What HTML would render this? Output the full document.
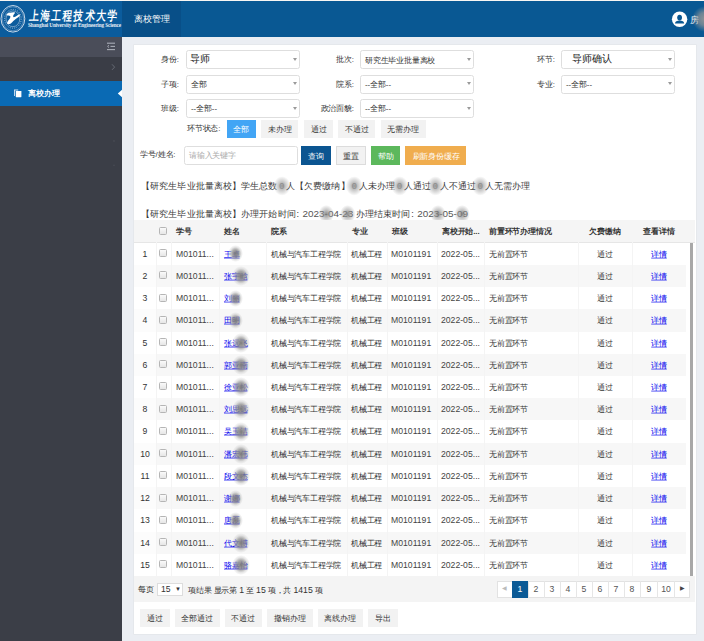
<!DOCTYPE html>
<html><head><meta charset="utf-8">
<style>
*{box-sizing:border-box;margin:0;padding:0}
html,body{width:704px;height:641px;overflow:hidden}
body{position:relative;background:#ebeef3;font-family:"Liberation Sans",sans-serif;font-size:12px;color:#333}
.abs{position:absolute}
.t{position:absolute;white-space:nowrap;line-height:1.3}
.L{font-size:1.11em}
.Lc{color:#4a4a4a}
#topline{left:0;top:0;width:704px;height:1px;background:#f8f6f3}
#hdr{left:0;top:1px;width:704px;height:36px;background:#095893}
#logo{left:0;top:0;width:122px;height:36px;background:#0b5c9d}
#tab{left:122px;top:0;width:59px;height:36px;background:#084f88}
#side{left:0;top:37px;width:122px;height:604px;background:#3b3e47}
#tog{left:0;top:0;width:122px;height:20px;background:#4a4d59}
#item1{left:0;top:20px;width:122px;height:24px;background:#3a3d46}
#act{left:0;top:44px;width:122px;height:25px;background:#0a6ab4}
#panel{left:133.5px;top:44.5px;width:562.5px;height:589.5px;background:#fff;box-shadow:0 0 0 0.6px #e2e4e8}
.sel{position:absolute;height:19px;border:1px solid #dedede;border-radius:2.5px;background:#fff}
.sel:after{content:"";position:absolute;right:1.6px;top:6.6px;border-left:2.7px solid transparent;border-right:2.7px solid transparent;border-top:3.2px solid #9a9a9a}
.sel.nosel:after{display:none}
.btn{position:absolute;height:19px;background:#f2f2f2}
.thead{background:#f5f5f5}
.tr{left:0;width:552px;height:22.27px}
.cb{position:absolute;width:8px;height:8px;border:1px solid #b5b5b5;border-radius:1.5px;background:linear-gradient(#fafafa,#e6e6e6)}
.lk{color:#0000ee;text-decoration:underline}
.blob{position:absolute;border-radius:50%;background:radial-gradient(closest-side,rgba(125,125,125,1),rgba(140,140,140,.75) 45%,rgba(170,170,170,.3) 75%,rgba(200,200,200,0))}
.vl{position:absolute;top:0;width:1px;background:#f4f4f4}
.dg{display:inline-block;text-align:center;font-size:1.0em;position:relative;color:#999}
.dg:before{content:"";position:absolute;left:50%;top:50%;width:26px;height:30px;margin:-15px 0 0 -13px;border-radius:50%;background:radial-gradient(closest-side,rgba(125,125,125,.8),rgba(150,150,150,.45) 50%,rgba(200,200,200,0))}
.dg2{position:relative}
.dg2:before{content:"";position:absolute;left:50%;top:50%;width:24px;height:28px;margin:-14px 0 0 -12px;border-radius:50%;background:radial-gradient(closest-side,rgba(120,120,120,.85),rgba(150,150,150,.5) 50%,rgba(200,200,200,0))}
.L2{font-size:1.09em;color:#555}
.cln{display:inline-block;width:.75em;text-align:left;padding-left:.1em}
.pag{position:absolute;left:362.7px;top:4.6px;height:17.4px;border:1px solid #e3e3e3;background:#fff}
.pg{position:absolute;top:0;width:16px;height:15.4px;border-left:1px solid #e8e8e8}
</style></head><body>
<div id="topline" class="abs"></div>
<div id="hdr" class="abs"><div id="logo" class="abs"></div><div id="tab" class="abs"></div></div>
<svg class="abs" style="left:0;top:1px" width="122" height="36" viewBox="0 0 122 36">
<ellipse cx="12.9" cy="17.8" rx="11.9" ry="13.3" fill="none" stroke="#dfe8f2" stroke-width="0.9"/>
<ellipse cx="12.9" cy="17.8" rx="10.6" ry="12" fill="none" stroke="#9fb9d6" stroke-width="0.5"/>
<ellipse cx="12.9" cy="17.8" rx="8.3" ry="9.4" fill="none" stroke="#c9d8e8" stroke-width="0.8" stroke-dasharray="1 1.3"/>
<ellipse cx="12.9" cy="17.8" rx="6.9" ry="7.9" fill="none" stroke="#d5e1ee" stroke-width="0.5"/>
<path transform="translate(0,-1)" d="M6.6 14.2 C8 12.6 11 12.8 13.5 12.2 C14.8 11.9 15.4 12.6 14.6 13.6 C13.8 14.6 13 15.5 13.2 16.8 C13.6 17.6 15 17 16.5 16 C18 15 19.5 14.4 20.2 14.6 C20.4 15.4 19 16.8 17.5 17.8 C15.5 19.2 13.5 20.6 12.2 22.2 C11 23.6 9.2 24.4 7.8 24 C6.8 23.6 6.9 22.4 7.8 21.2 C9 19.6 10.4 18 10.4 16.4 C10.2 15.4 8.6 15.4 7.4 15.4 C6.6 15.3 6.3 14.8 6.6 14.2 Z" fill="#fff"/>
</svg>
<div class="t" style="left:28.5px;top:16.1px;font-size:16px;color:#fff;font-weight:bold;letter-spacing:2.67px;transform-origin:0 50%;transform:translateY(-50%) scale(0.6,0.8) skewX(-8deg)">上海工程技术大学</div>
<div class="t " style="left:28.30px;top:26.20px;font-size:8px;transform-origin:0 50%;transform:translateY(-50%) scale(0.6500);color:#e8eef5;font-weight:bold;font-family:'Liberation Serif',serif;letter-spacing:-0.15px">Shanghai University of Engineering Science</div>
<div class="t " style="left:151.50px;top:19.00px;font-size:14px;transform-origin:50% 50%;transform:translate(-50%,-50%) scale(0.6357);color:#fff;">离校管理</div>
<div id="side" class="abs"><div id="tog" class="abs"></div><div id="item1" class="abs"></div><div id="act" class="abs"></div></div>
<div class="t " style="left:27.90px;top:93.60px;font-size:12px;transform-origin:0 50%;transform:translateY(-50%) scale(0.6542);color:#fff;font-weight:bold;">离校办理</div>
<svg class="abs" style="left:0;top:37px" width="122" height="140" viewBox="0 0 122 140">
<g stroke="#a9adb7" stroke-width="1.1" fill="none">
<line x1="107" y1="6.2" x2="115" y2="6.2"/><line x1="110.5" y1="9.4" x2="115" y2="9.4"/><line x1="107" y1="12.6" x2="115" y2="12.6"/>
<polyline points="109,8.2 107.6,9.4 109,10.6" stroke-width="0.9"/>
</g>
<polyline points="112,27.3 114.6,30.1 112,32.9" stroke="#6a6e78" stroke-width="0.9" fill="none"/>
<g fill="#fff"><rect x="15.8" y="54" width="5.6" height="6.2" rx="0.4"/><path d="M14 52.6 h4.2 v0.9 h-3.3 v5.4 h-0.9 z" fill="#cfe0f0"/></g>
<polygon points="122,52.8 117.8,56.5 122,60.2" fill="#fff"/>
<g fill="#474a53"><circle cx="114" cy="104" r="0.9"/><circle cx="114" cy="128.3" r="0.9"/></g>
</svg>
<svg class="abs" style="left:670px;top:9px" width="20" height="20" viewBox="0 0 20 20">
<circle cx="9.6" cy="10.3" r="7.7" fill="#fff"/>
<ellipse cx="9.6" cy="8.6" rx="2.4" ry="2.9" fill="#095893"/>
<path d="M5 14.6 C5.2 12.4 7 11.6 9.6 11.6 C12.2 11.6 14 12.4 14.2 14.6 Z" fill="#095893"/>
</svg>
<div class="t " style="left:690.20px;top:19.80px;font-size:14px;transform-origin:0 50%;transform:translateY(-50%) scale(0.6286);color:#fff;">房</div>
<div class="blob" style="left:692px;top:6px;width:26px;height:26px;background:radial-gradient(closest-side,rgba(150,150,150,.95),rgba(150,150,150,.7) 50%,rgba(150,150,150,0))"></div>
<div id="panel" class="abs"></div>
<div class="t " style="left:179.20px;top:60.20px;font-size:12px;transform-origin:100% 50%;transform:translate(-100%,-50%) scale(0.6500);">身份:</div>
<div class="t " style="left:354.20px;top:60.20px;font-size:12px;transform-origin:100% 50%;transform:translate(-100%,-50%) scale(0.6500);">批次:</div>
<div class="t " style="left:555.20px;top:60.20px;font-size:12px;transform-origin:100% 50%;transform:translate(-100%,-50%) scale(0.6500);">环节:</div>
<div class="t " style="left:179.20px;top:84.60px;font-size:12px;transform-origin:100% 50%;transform:translate(-100%,-50%) scale(0.6500);">子项:</div>
<div class="t " style="left:354.20px;top:84.60px;font-size:12px;transform-origin:100% 50%;transform:translate(-100%,-50%) scale(0.6500);">院系:</div>
<div class="t " style="left:555.20px;top:84.60px;font-size:12px;transform-origin:100% 50%;transform:translate(-100%,-50%) scale(0.6500);">专业:</div>
<div class="t " style="left:179.20px;top:109.10px;font-size:12px;transform-origin:100% 50%;transform:translate(-100%,-50%) scale(0.6500);">班级:</div>
<div class="t " style="left:354.20px;top:109.10px;font-size:12px;transform-origin:100% 50%;transform:translate(-100%,-50%) scale(0.6500);">政治面貌:</div>
<div class="sel" style="left:186px;top:50.4px;width:113.5px"></div><div class="t " style="left:190.20px;top:58.80px;font-size:16px;transform-origin:0 50%;transform:translateY(-50%) scale(0.6250);letter-spacing:0px;color:#222">导师</div>
<div class="sel" style="left:360.2px;top:50.4px;width:113.6px"></div><div class="t " style="left:365.20px;top:60.80px;font-size:12px;transform-origin:0 50%;transform:translateY(-50%) scale(0.6500);">研究生毕业批量离校</div>
<div class="sel" style="left:561.3px;top:50.4px;width:113.3px"></div><div class="t " style="left:571.80px;top:58.80px;font-size:16px;transform-origin:0 50%;transform:translateY(-50%) scale(0.6250);letter-spacing:0px;color:#222">导师确认</div>
<div class="sel" style="left:186px;top:74.7px;width:113.5px"></div><div class="t " style="left:191.00px;top:85.10px;font-size:12px;transform-origin:0 50%;transform:translateY(-50%) scale(0.6500);">全部</div>
<div class="sel" style="left:360.2px;top:74.7px;width:113.6px"></div><div class="t " style="left:365.20px;top:85.10px;font-size:12px;transform-origin:0 50%;transform:translateY(-50%) scale(0.6500);">--全部--</div>
<div class="sel" style="left:561.3px;top:74.7px;width:113.3px"></div><div class="t " style="left:566.30px;top:85.10px;font-size:12px;transform-origin:0 50%;transform:translateY(-50%) scale(0.6500);">--全部--</div>
<div class="sel" style="left:186px;top:99.0px;width:113.5px"></div><div class="t " style="left:191.00px;top:109.40px;font-size:12px;transform-origin:0 50%;transform:translateY(-50%) scale(0.6500);">--全部--</div>
<div class="sel" style="left:360.2px;top:99.0px;width:113.6px"></div><div class="t " style="left:365.20px;top:109.40px;font-size:12px;transform-origin:0 50%;transform:translateY(-50%) scale(0.6500);">--全部--</div>
<div class="t " style="left:187.00px;top:128.60px;font-size:12px;transform-origin:0 50%;transform:translateY(-50%) scale(0.6500);">环节状态:</div>
<div class="btn" style="left:226.6px;top:119.5px;width:29.7px;height:18.9px;background:#42a5f5;"></div><div class="t " style="left:241.45px;top:129.85px;font-size:12px;transform-origin:50% 50%;transform:translate(-50%,-50%) scale(0.6500);color:#fff;">全部</div>
<div class="btn" style="left:260.7px;top:119.5px;width:37.8px;height:18.9px;background:#f2f2f2;"></div><div class="t " style="left:279.60px;top:129.85px;font-size:12px;transform-origin:50% 50%;transform:translate(-50%,-50%) scale(0.6500);color:#333;">未办理</div>
<div class="btn" style="left:304.2px;top:119.5px;width:29.0px;height:18.9px;background:#f2f2f2;"></div><div class="t " style="left:318.70px;top:129.85px;font-size:12px;transform-origin:50% 50%;transform:translate(-50%,-50%) scale(0.6500);color:#333;">通过</div>
<div class="btn" style="left:338.3px;top:119.5px;width:36.9px;height:18.9px;background:#f2f2f2;"></div><div class="t " style="left:356.75px;top:129.85px;font-size:12px;transform-origin:50% 50%;transform:translate(-50%,-50%) scale(0.6500);color:#333;">不通过</div>
<div class="btn" style="left:380.9px;top:119.5px;width:44.9px;height:18.9px;background:#f2f2f2;"></div><div class="t " style="left:403.35px;top:129.85px;font-size:12px;transform-origin:50% 50%;transform:translate(-50%,-50%) scale(0.6500);color:#333;">无需办理</div>
<div class="t " style="left:140.00px;top:155.20px;font-size:12px;transform-origin:0 50%;transform:translateY(-50%) scale(0.6500);">学号/姓名:</div>
<div class="sel nosel" style="left:184px;top:146.2px;width:113.6px"></div>
<div class="t " style="left:189.00px;top:156.00px;font-size:12px;transform-origin:0 50%;transform:translateY(-50%) scale(0.6500);color:#aaa;">请输入关键字</div>
<div class="btn" style="left:301.4px;top:146.4px;width:29.2px;height:18.4px;background:#0b5591;"></div><div class="t " style="left:316.00px;top:156.50px;font-size:12px;transform-origin:50% 50%;transform:translate(-50%,-50%) scale(0.6500);color:#fff;">查询</div>
<div class="btn" style="left:336.3px;top:146.4px;width:29.3px;height:18.4px;background:#f2f2f2;border:1px solid #dcdcdc;"></div><div class="t " style="left:350.95px;top:156.50px;font-size:12px;transform-origin:50% 50%;transform:translate(-50%,-50%) scale(0.6500);color:#333;">重置</div>
<div class="btn" style="left:371.0px;top:146.4px;width:29.2px;height:18.4px;background:#5cb85c;"></div><div class="t " style="left:385.60px;top:156.50px;font-size:12px;transform-origin:50% 50%;transform:translate(-50%,-50%) scale(0.6500);color:#fff;">帮助</div>
<div class="btn" style="left:405.0px;top:146.4px;width:61.1px;height:18.4px;background:#f0ad4e;"></div><div class="t " style="left:435.55px;top:156.50px;font-size:12px;transform-origin:50% 50%;transform:translate(-50%,-50%) scale(0.6500);color:#fff;">刷新身份缓存</div>
<div class="t " style="left:141.00px;top:186.20px;font-size:14px;transform-origin:0 50%;transform:translateY(-50%) scale(0.6500);color:#3a3a3a;">【研究生毕业批量离校】学生总数<span class="dg" style="width:13px">0</span>人【欠费缴纳】<span class="dg" style="width:14.5px">0</span>人未办理<span class="dg" style="width:12.5px">0</span>人通过<span class="dg" style="width:13.5px">0</span>人不通过<span class="dg" style="width:13px">0</span>人无需办理</div>
<div class="t " style="left:141.00px;top:214.40px;font-size:14px;transform-origin:0 50%;transform:translateY(-50%) scale(0.6500);color:#3a3a3a;">【研究生毕业批量离校】办理开始时间<span class="cln">:</span><span class="L2">202<span class="dg2">3-0</span>4-<span class="dg2">23</span></span> 办理结束时间<span class="cln">:</span><span class="L2">202<span class="dg2">3-</span>05-<span class="dg2">09</span></span></div>
<div id="tbl" class="abs" style="left:134px;top:220px;width:561px;height:382px;overflow:hidden"><div class="thead abs" style="left:0;top:0;width:561px;height:22.7px"></div><div class="abs" style="left:0;top:22px;width:561px;height:0.8px;background:#e6e6e6"></div><div class="tr abs" style="top:22.70px;background:#fff"></div><div class="tr abs" style="top:44.92px;background:#f7f7f7"></div><div class="abs" style="left:0;top:44.92px;width:21.5px;height:22.22px;background:#fcfcfc"></div><div class="tr abs" style="top:67.14px;background:#fff"></div><div class="tr abs" style="top:89.36px;background:#f7f7f7"></div><div class="abs" style="left:0;top:89.36px;width:21.5px;height:22.22px;background:#fcfcfc"></div><div class="tr abs" style="top:111.58px;background:#fff"></div><div class="tr abs" style="top:133.80px;background:#f7f7f7"></div><div class="abs" style="left:0;top:133.80px;width:21.5px;height:22.22px;background:#fcfcfc"></div><div class="tr abs" style="top:156.02px;background:#fff"></div><div class="tr abs" style="top:178.24px;background:#f7f7f7"></div><div class="abs" style="left:0;top:178.24px;width:21.5px;height:22.22px;background:#fcfcfc"></div><div class="tr abs" style="top:200.46px;background:#fff"></div><div class="tr abs" style="top:222.68px;background:#f7f7f7"></div><div class="abs" style="left:0;top:222.68px;width:21.5px;height:22.22px;background:#fcfcfc"></div><div class="tr abs" style="top:244.90px;background:#fff"></div><div class="tr abs" style="top:267.12px;background:#f7f7f7"></div><div class="abs" style="left:0;top:267.12px;width:21.5px;height:22.22px;background:#fcfcfc"></div><div class="tr abs" style="top:289.34px;background:#fff"></div><div class="tr abs" style="top:311.56px;background:#f7f7f7"></div><div class="abs" style="left:0;top:311.56px;width:21.5px;height:22.22px;background:#fcfcfc"></div><div class="tr abs" style="top:333.78px;background:#fff"></div><div class="vl" style="left:21.5px;top:22px;height:334px"></div><div class="vl" style="left:37.1px;top:22px;height:334px"></div><div class="vl" style="left:85.3px;top:22px;height:334px"></div><div class="vl" style="left:132.3px;top:22px;height:334px"></div><div class="vl" style="left:212.6px;top:22px;height:334px"></div><div class="vl" style="left:253.0px;top:22px;height:334px"></div><div class="vl" style="left:302.7px;top:22px;height:334px"></div><div class="vl" style="left:349.7px;top:22px;height:334px"></div><div class="vl" style="left:444.0px;top:22px;height:334px"></div><div class="vl" style="left:498.4px;top:22px;height:334px"></div><div class="abs" style="left:556px;top:23px;width:3px;height:333px;background:#a8a8a8"></div><div class="abs" style="left:0;top:356px;width:561px;height:26px;background:#f4f4f4"></div></div>
<div class="cb" style="left:159px;top:227.3px"></div>
<div class="t " style="left:176.10px;top:231.80px;font-size:12px;transform-origin:0 50%;transform:translateY(-50%) scale(0.6500);color:#333;font-weight:bold;">学号</div>
<div class="t " style="left:224.30px;top:231.80px;font-size:12px;transform-origin:0 50%;transform:translateY(-50%) scale(0.6500);color:#333;font-weight:bold;">姓名</div>
<div class="t " style="left:271.30px;top:231.80px;font-size:12px;transform-origin:0 50%;transform:translateY(-50%) scale(0.6500);color:#333;font-weight:bold;">院系</div>
<div class="t " style="left:351.60px;top:231.80px;font-size:12px;transform-origin:0 50%;transform:translateY(-50%) scale(0.6500);color:#333;font-weight:bold;">专业</div>
<div class="t " style="left:392.00px;top:231.80px;font-size:12px;transform-origin:0 50%;transform:translateY(-50%) scale(0.6500);color:#333;font-weight:bold;">班级</div>
<div class="t " style="left:441.70px;top:231.80px;font-size:12px;transform-origin:0 50%;transform:translateY(-50%) scale(0.6500);color:#333;font-weight:bold;">离校开始...</div>
<div class="t " style="left:488.70px;top:231.80px;font-size:12px;transform-origin:0 50%;transform:translateY(-50%) scale(0.6500);color:#333;font-weight:bold;">前置环节办理情况</div>
<div class="t " style="left:605.20px;top:231.80px;font-size:12px;transform-origin:50% 50%;transform:translate(-50%,-50%) scale(0.6500);color:#333;font-weight:bold;">欠费缴纳</div>
<div class="t " style="left:659.05px;top:231.80px;font-size:12px;transform-origin:50% 50%;transform:translate(-50%,-50%) scale(0.6500);color:#333;font-weight:bold;">查看详情</div>
<div class="t " style="left:144.50px;top:254.71px;font-size:13px;transform-origin:50% 50%;transform:translate(-50%,-50%) scale(0.6654);">1</div>
<div class="cb" style="left:159px;top:249.1px"></div>
<div class="t " style="left:175.80px;top:254.71px;font-size:13px;transform-origin:0 50%;transform:translateY(-50%) scale(0.6654);color:#444;">M01011...</div>
<div class="t " style="left:223.80px;top:254.71px;font-size:12px;transform-origin:0 50%;transform:translateY(-50%) scale(0.6500);"><span class="lk">王卓</span></div>
<div class="blob" style="left:228.0px;top:245.2px;width:15px;height:17px;opacity:1.0"></div>
<div class="t " style="left:271.30px;top:254.71px;font-size:12px;transform-origin:0 50%;transform:translateY(-50%) scale(0.6500);">机械与汽车工程学院</div>
<div class="t " style="left:351.00px;top:254.71px;font-size:12px;transform-origin:0 50%;transform:translateY(-50%) scale(0.6500);">机械工程</div>
<div class="t " style="left:391.20px;top:254.71px;font-size:13px;transform-origin:0 50%;transform:translateY(-50%) scale(0.6654);color:#444;">M0101191</div>
<div class="t " style="left:441.00px;top:254.71px;font-size:13px;transform-origin:0 50%;transform:translateY(-50%) scale(0.6654);color:#444;">2022-05...</div>
<div class="t " style="left:488.80px;top:254.71px;font-size:12px;transform-origin:0 50%;transform:translateY(-50%) scale(0.6500);">无前置环节</div>
<div class="t " style="left:605.00px;top:254.71px;font-size:12px;transform-origin:50% 50%;transform:translate(-50%,-50%) scale(0.6500);">通过</div>
<div class="t " style="left:658.60px;top:254.71px;font-size:12px;transform-origin:50% 50%;transform:translate(-50%,-50%) scale(0.6500);"><span class="lk">详情</span></div>
<div class="t " style="left:144.50px;top:276.93px;font-size:13px;transform-origin:50% 50%;transform:translate(-50%,-50%) scale(0.6654);">2</div>
<div class="cb" style="left:159px;top:271.3px"></div>
<div class="t " style="left:175.80px;top:276.93px;font-size:13px;transform-origin:0 50%;transform:translateY(-50%) scale(0.6654);color:#444;">M01011...</div>
<div class="t " style="left:223.80px;top:276.93px;font-size:12px;transform-origin:0 50%;transform:translateY(-50%) scale(0.6500);"><span class="lk">张宇晗</span></div>
<div class="blob" style="left:231.5px;top:265.9px;width:18px;height:20px;opacity:1.0"></div>
<div class="t " style="left:271.30px;top:276.93px;font-size:12px;transform-origin:0 50%;transform:translateY(-50%) scale(0.6500);">机械与汽车工程学院</div>
<div class="t " style="left:351.00px;top:276.93px;font-size:12px;transform-origin:0 50%;transform:translateY(-50%) scale(0.6500);">机械工程</div>
<div class="t " style="left:391.20px;top:276.93px;font-size:13px;transform-origin:0 50%;transform:translateY(-50%) scale(0.6654);color:#444;">M0101191</div>
<div class="t " style="left:441.00px;top:276.93px;font-size:13px;transform-origin:0 50%;transform:translateY(-50%) scale(0.6654);color:#444;">2022-05...</div>
<div class="t " style="left:488.80px;top:276.93px;font-size:12px;transform-origin:0 50%;transform:translateY(-50%) scale(0.6500);">无前置环节</div>
<div class="t " style="left:605.00px;top:276.93px;font-size:12px;transform-origin:50% 50%;transform:translate(-50%,-50%) scale(0.6500);">通过</div>
<div class="t " style="left:658.60px;top:276.93px;font-size:12px;transform-origin:50% 50%;transform:translate(-50%,-50%) scale(0.6500);"><span class="lk">详情</span></div>
<div class="t " style="left:144.50px;top:299.15px;font-size:13px;transform-origin:50% 50%;transform:translate(-50%,-50%) scale(0.6654);">3</div>
<div class="cb" style="left:159px;top:293.5px"></div>
<div class="t " style="left:175.80px;top:299.15px;font-size:13px;transform-origin:0 50%;transform:translateY(-50%) scale(0.6654);color:#444;">M01011...</div>
<div class="t " style="left:223.80px;top:299.15px;font-size:12px;transform-origin:0 50%;transform:translateY(-50%) scale(0.6500);"><span class="lk">刘丽</span></div>
<div class="blob" style="left:228.0px;top:289.6px;width:15px;height:17px;opacity:1.0"></div>
<div class="t " style="left:271.30px;top:299.15px;font-size:12px;transform-origin:0 50%;transform:translateY(-50%) scale(0.6500);">机械与汽车工程学院</div>
<div class="t " style="left:351.00px;top:299.15px;font-size:12px;transform-origin:0 50%;transform:translateY(-50%) scale(0.6500);">机械工程</div>
<div class="t " style="left:391.20px;top:299.15px;font-size:13px;transform-origin:0 50%;transform:translateY(-50%) scale(0.6654);color:#444;">M0101191</div>
<div class="t " style="left:441.00px;top:299.15px;font-size:13px;transform-origin:0 50%;transform:translateY(-50%) scale(0.6654);color:#444;">2022-05...</div>
<div class="t " style="left:488.80px;top:299.15px;font-size:12px;transform-origin:0 50%;transform:translateY(-50%) scale(0.6500);">无前置环节</div>
<div class="t " style="left:605.00px;top:299.15px;font-size:12px;transform-origin:50% 50%;transform:translate(-50%,-50%) scale(0.6500);">通过</div>
<div class="t " style="left:658.60px;top:299.15px;font-size:12px;transform-origin:50% 50%;transform:translate(-50%,-50%) scale(0.6500);"><span class="lk">详情</span></div>
<div class="t " style="left:144.50px;top:321.37px;font-size:13px;transform-origin:50% 50%;transform:translate(-50%,-50%) scale(0.6654);">4</div>
<div class="cb" style="left:159px;top:315.8px"></div>
<div class="t " style="left:175.80px;top:321.37px;font-size:13px;transform-origin:0 50%;transform:translateY(-50%) scale(0.6654);color:#444;">M01011...</div>
<div class="t " style="left:223.80px;top:321.37px;font-size:12px;transform-origin:0 50%;transform:translateY(-50%) scale(0.6500);"><span class="lk">田明</span></div>
<div class="blob" style="left:228.0px;top:311.9px;width:15px;height:17px;opacity:1.0"></div>
<div class="t " style="left:271.30px;top:321.37px;font-size:12px;transform-origin:0 50%;transform:translateY(-50%) scale(0.6500);">机械与汽车工程学院</div>
<div class="t " style="left:351.00px;top:321.37px;font-size:12px;transform-origin:0 50%;transform:translateY(-50%) scale(0.6500);">机械工程</div>
<div class="t " style="left:391.20px;top:321.37px;font-size:13px;transform-origin:0 50%;transform:translateY(-50%) scale(0.6654);color:#444;">M0101191</div>
<div class="t " style="left:441.00px;top:321.37px;font-size:13px;transform-origin:0 50%;transform:translateY(-50%) scale(0.6654);color:#444;">2022-05...</div>
<div class="t " style="left:488.80px;top:321.37px;font-size:12px;transform-origin:0 50%;transform:translateY(-50%) scale(0.6500);">无前置环节</div>
<div class="t " style="left:605.00px;top:321.37px;font-size:12px;transform-origin:50% 50%;transform:translate(-50%,-50%) scale(0.6500);">通过</div>
<div class="t " style="left:658.60px;top:321.37px;font-size:12px;transform-origin:50% 50%;transform:translate(-50%,-50%) scale(0.6500);"><span class="lk">详情</span></div>
<div class="t " style="left:144.50px;top:343.59px;font-size:13px;transform-origin:50% 50%;transform:translate(-50%,-50%) scale(0.6654);">5</div>
<div class="cb" style="left:159px;top:338.0px"></div>
<div class="t " style="left:175.80px;top:343.59px;font-size:13px;transform-origin:0 50%;transform:translateY(-50%) scale(0.6654);color:#444;">M01011...</div>
<div class="t " style="left:223.80px;top:343.59px;font-size:12px;transform-origin:0 50%;transform:translateY(-50%) scale(0.6500);"><span class="lk">张远飞</span></div>
<div class="blob" style="left:231.5px;top:332.6px;width:18px;height:20px;opacity:1.0"></div>
<div class="t " style="left:271.30px;top:343.59px;font-size:12px;transform-origin:0 50%;transform:translateY(-50%) scale(0.6500);">机械与汽车工程学院</div>
<div class="t " style="left:351.00px;top:343.59px;font-size:12px;transform-origin:0 50%;transform:translateY(-50%) scale(0.6500);">机械工程</div>
<div class="t " style="left:391.20px;top:343.59px;font-size:13px;transform-origin:0 50%;transform:translateY(-50%) scale(0.6654);color:#444;">M0101191</div>
<div class="t " style="left:441.00px;top:343.59px;font-size:13px;transform-origin:0 50%;transform:translateY(-50%) scale(0.6654);color:#444;">2022-05...</div>
<div class="t " style="left:488.80px;top:343.59px;font-size:12px;transform-origin:0 50%;transform:translateY(-50%) scale(0.6500);">无前置环节</div>
<div class="t " style="left:605.00px;top:343.59px;font-size:12px;transform-origin:50% 50%;transform:translate(-50%,-50%) scale(0.6500);">通过</div>
<div class="t " style="left:658.60px;top:343.59px;font-size:12px;transform-origin:50% 50%;transform:translate(-50%,-50%) scale(0.6500);"><span class="lk">详情</span></div>
<div class="t " style="left:144.50px;top:365.81px;font-size:13px;transform-origin:50% 50%;transform:translate(-50%,-50%) scale(0.6654);">6</div>
<div class="cb" style="left:159px;top:360.2px"></div>
<div class="t " style="left:175.80px;top:365.81px;font-size:13px;transform-origin:0 50%;transform:translateY(-50%) scale(0.6654);color:#444;">M01011...</div>
<div class="t " style="left:223.80px;top:365.81px;font-size:12px;transform-origin:0 50%;transform:translateY(-50%) scale(0.6500);"><span class="lk">郭亚南</span></div>
<div class="blob" style="left:231.5px;top:354.8px;width:18px;height:20px;opacity:1.0"></div>
<div class="t " style="left:271.30px;top:365.81px;font-size:12px;transform-origin:0 50%;transform:translateY(-50%) scale(0.6500);">机械与汽车工程学院</div>
<div class="t " style="left:351.00px;top:365.81px;font-size:12px;transform-origin:0 50%;transform:translateY(-50%) scale(0.6500);">机械工程</div>
<div class="t " style="left:391.20px;top:365.81px;font-size:13px;transform-origin:0 50%;transform:translateY(-50%) scale(0.6654);color:#444;">M0101191</div>
<div class="t " style="left:441.00px;top:365.81px;font-size:13px;transform-origin:0 50%;transform:translateY(-50%) scale(0.6654);color:#444;">2022-05...</div>
<div class="t " style="left:488.80px;top:365.81px;font-size:12px;transform-origin:0 50%;transform:translateY(-50%) scale(0.6500);">无前置环节</div>
<div class="t " style="left:605.00px;top:365.81px;font-size:12px;transform-origin:50% 50%;transform:translate(-50%,-50%) scale(0.6500);">通过</div>
<div class="t " style="left:658.60px;top:365.81px;font-size:12px;transform-origin:50% 50%;transform:translate(-50%,-50%) scale(0.6500);"><span class="lk">详情</span></div>
<div class="t " style="left:144.50px;top:388.03px;font-size:13px;transform-origin:50% 50%;transform:translate(-50%,-50%) scale(0.6654);">7</div>
<div class="cb" style="left:159px;top:382.4px"></div>
<div class="t " style="left:175.80px;top:388.03px;font-size:13px;transform-origin:0 50%;transform:translateY(-50%) scale(0.6654);color:#444;">M01011...</div>
<div class="t " style="left:223.80px;top:388.03px;font-size:12px;transform-origin:0 50%;transform:translateY(-50%) scale(0.6500);"><span class="lk">徐亚松</span></div>
<div class="blob" style="left:231.5px;top:377.0px;width:18px;height:20px;opacity:1.0"></div>
<div class="t " style="left:271.30px;top:388.03px;font-size:12px;transform-origin:0 50%;transform:translateY(-50%) scale(0.6500);">机械与汽车工程学院</div>
<div class="t " style="left:351.00px;top:388.03px;font-size:12px;transform-origin:0 50%;transform:translateY(-50%) scale(0.6500);">机械工程</div>
<div class="t " style="left:391.20px;top:388.03px;font-size:13px;transform-origin:0 50%;transform:translateY(-50%) scale(0.6654);color:#444;">M0101191</div>
<div class="t " style="left:441.00px;top:388.03px;font-size:13px;transform-origin:0 50%;transform:translateY(-50%) scale(0.6654);color:#444;">2022-05...</div>
<div class="t " style="left:488.80px;top:388.03px;font-size:12px;transform-origin:0 50%;transform:translateY(-50%) scale(0.6500);">无前置环节</div>
<div class="t " style="left:605.00px;top:388.03px;font-size:12px;transform-origin:50% 50%;transform:translate(-50%,-50%) scale(0.6500);">通过</div>
<div class="t " style="left:658.60px;top:388.03px;font-size:12px;transform-origin:50% 50%;transform:translate(-50%,-50%) scale(0.6500);"><span class="lk">详情</span></div>
<div class="t " style="left:144.50px;top:410.25px;font-size:13px;transform-origin:50% 50%;transform:translate(-50%,-50%) scale(0.6654);">8</div>
<div class="cb" style="left:159px;top:404.6px"></div>
<div class="t " style="left:175.80px;top:410.25px;font-size:13px;transform-origin:0 50%;transform:translateY(-50%) scale(0.6654);color:#444;">M01011...</div>
<div class="t " style="left:223.80px;top:410.25px;font-size:12px;transform-origin:0 50%;transform:translateY(-50%) scale(0.6500);"><span class="lk">刘思远</span></div>
<div class="blob" style="left:231.5px;top:399.2px;width:18px;height:20px;opacity:1.0"></div>
<div class="t " style="left:271.30px;top:410.25px;font-size:12px;transform-origin:0 50%;transform:translateY(-50%) scale(0.6500);">机械与汽车工程学院</div>
<div class="t " style="left:351.00px;top:410.25px;font-size:12px;transform-origin:0 50%;transform:translateY(-50%) scale(0.6500);">机械工程</div>
<div class="t " style="left:391.20px;top:410.25px;font-size:13px;transform-origin:0 50%;transform:translateY(-50%) scale(0.6654);color:#444;">M0101191</div>
<div class="t " style="left:441.00px;top:410.25px;font-size:13px;transform-origin:0 50%;transform:translateY(-50%) scale(0.6654);color:#444;">2022-05...</div>
<div class="t " style="left:488.80px;top:410.25px;font-size:12px;transform-origin:0 50%;transform:translateY(-50%) scale(0.6500);">无前置环节</div>
<div class="t " style="left:605.00px;top:410.25px;font-size:12px;transform-origin:50% 50%;transform:translate(-50%,-50%) scale(0.6500);">通过</div>
<div class="t " style="left:658.60px;top:410.25px;font-size:12px;transform-origin:50% 50%;transform:translate(-50%,-50%) scale(0.6500);"><span class="lk">详情</span></div>
<div class="t " style="left:144.50px;top:432.47px;font-size:13px;transform-origin:50% 50%;transform:translate(-50%,-50%) scale(0.6654);">9</div>
<div class="cb" style="left:159px;top:426.9px"></div>
<div class="t " style="left:175.80px;top:432.47px;font-size:13px;transform-origin:0 50%;transform:translateY(-50%) scale(0.6654);color:#444;">M01011...</div>
<div class="t " style="left:223.80px;top:432.47px;font-size:12px;transform-origin:0 50%;transform:translateY(-50%) scale(0.6500);"><span class="lk">吴玉洁</span></div>
<div class="blob" style="left:231.5px;top:421.5px;width:18px;height:20px;opacity:1.0"></div>
<div class="t " style="left:271.30px;top:432.47px;font-size:12px;transform-origin:0 50%;transform:translateY(-50%) scale(0.6500);">机械与汽车工程学院</div>
<div class="t " style="left:351.00px;top:432.47px;font-size:12px;transform-origin:0 50%;transform:translateY(-50%) scale(0.6500);">机械工程</div>
<div class="t " style="left:391.20px;top:432.47px;font-size:13px;transform-origin:0 50%;transform:translateY(-50%) scale(0.6654);color:#444;">M0101191</div>
<div class="t " style="left:441.00px;top:432.47px;font-size:13px;transform-origin:0 50%;transform:translateY(-50%) scale(0.6654);color:#444;">2022-05...</div>
<div class="t " style="left:488.80px;top:432.47px;font-size:12px;transform-origin:0 50%;transform:translateY(-50%) scale(0.6500);">无前置环节</div>
<div class="t " style="left:605.00px;top:432.47px;font-size:12px;transform-origin:50% 50%;transform:translate(-50%,-50%) scale(0.6500);">通过</div>
<div class="t " style="left:658.60px;top:432.47px;font-size:12px;transform-origin:50% 50%;transform:translate(-50%,-50%) scale(0.6500);"><span class="lk">详情</span></div>
<div class="t " style="left:144.50px;top:454.69px;font-size:13px;transform-origin:50% 50%;transform:translate(-50%,-50%) scale(0.6654);">10</div>
<div class="cb" style="left:159px;top:449.1px"></div>
<div class="t " style="left:175.80px;top:454.69px;font-size:13px;transform-origin:0 50%;transform:translateY(-50%) scale(0.6654);color:#444;">M01011...</div>
<div class="t " style="left:223.80px;top:454.69px;font-size:12px;transform-origin:0 50%;transform:translateY(-50%) scale(0.6500);"><span class="lk">潘宏伟</span></div>
<div class="blob" style="left:231.5px;top:443.7px;width:18px;height:20px;opacity:1.0"></div>
<div class="t " style="left:271.30px;top:454.69px;font-size:12px;transform-origin:0 50%;transform:translateY(-50%) scale(0.6500);">机械与汽车工程学院</div>
<div class="t " style="left:351.00px;top:454.69px;font-size:12px;transform-origin:0 50%;transform:translateY(-50%) scale(0.6500);">机械工程</div>
<div class="t " style="left:391.20px;top:454.69px;font-size:13px;transform-origin:0 50%;transform:translateY(-50%) scale(0.6654);color:#444;">M0101191</div>
<div class="t " style="left:441.00px;top:454.69px;font-size:13px;transform-origin:0 50%;transform:translateY(-50%) scale(0.6654);color:#444;">2022-05...</div>
<div class="t " style="left:488.80px;top:454.69px;font-size:12px;transform-origin:0 50%;transform:translateY(-50%) scale(0.6500);">无前置环节</div>
<div class="t " style="left:605.00px;top:454.69px;font-size:12px;transform-origin:50% 50%;transform:translate(-50%,-50%) scale(0.6500);">通过</div>
<div class="t " style="left:658.60px;top:454.69px;font-size:12px;transform-origin:50% 50%;transform:translate(-50%,-50%) scale(0.6500);"><span class="lk">详情</span></div>
<div class="t " style="left:144.50px;top:476.91px;font-size:13px;transform-origin:50% 50%;transform:translate(-50%,-50%) scale(0.6654);">11</div>
<div class="cb" style="left:159px;top:471.3px"></div>
<div class="t " style="left:175.80px;top:476.91px;font-size:13px;transform-origin:0 50%;transform:translateY(-50%) scale(0.6654);color:#444;">M01011...</div>
<div class="t " style="left:223.80px;top:476.91px;font-size:12px;transform-origin:0 50%;transform:translateY(-50%) scale(0.6500);"><span class="lk">段文杰</span></div>
<div class="blob" style="left:231.5px;top:465.9px;width:18px;height:20px;opacity:1.0"></div>
<div class="t " style="left:271.30px;top:476.91px;font-size:12px;transform-origin:0 50%;transform:translateY(-50%) scale(0.6500);">机械与汽车工程学院</div>
<div class="t " style="left:351.00px;top:476.91px;font-size:12px;transform-origin:0 50%;transform:translateY(-50%) scale(0.6500);">机械工程</div>
<div class="t " style="left:391.20px;top:476.91px;font-size:13px;transform-origin:0 50%;transform:translateY(-50%) scale(0.6654);color:#444;">M0101191</div>
<div class="t " style="left:441.00px;top:476.91px;font-size:13px;transform-origin:0 50%;transform:translateY(-50%) scale(0.6654);color:#444;">2022-05...</div>
<div class="t " style="left:488.80px;top:476.91px;font-size:12px;transform-origin:0 50%;transform:translateY(-50%) scale(0.6500);">无前置环节</div>
<div class="t " style="left:605.00px;top:476.91px;font-size:12px;transform-origin:50% 50%;transform:translate(-50%,-50%) scale(0.6500);">通过</div>
<div class="t " style="left:658.60px;top:476.91px;font-size:12px;transform-origin:50% 50%;transform:translate(-50%,-50%) scale(0.6500);"><span class="lk">详情</span></div>
<div class="t " style="left:144.50px;top:499.13px;font-size:13px;transform-origin:50% 50%;transform:translate(-50%,-50%) scale(0.6654);">12</div>
<div class="cb" style="left:159px;top:493.5px"></div>
<div class="t " style="left:175.80px;top:499.13px;font-size:13px;transform-origin:0 50%;transform:translateY(-50%) scale(0.6654);color:#444;">M01011...</div>
<div class="t " style="left:223.80px;top:499.13px;font-size:12px;transform-origin:0 50%;transform:translateY(-50%) scale(0.6500);"><span class="lk">谢娜</span></div>
<div class="blob" style="left:228.0px;top:489.6px;width:15px;height:17px;opacity:1.0"></div>
<div class="t " style="left:271.30px;top:499.13px;font-size:12px;transform-origin:0 50%;transform:translateY(-50%) scale(0.6500);">机械与汽车工程学院</div>
<div class="t " style="left:351.00px;top:499.13px;font-size:12px;transform-origin:0 50%;transform:translateY(-50%) scale(0.6500);">机械工程</div>
<div class="t " style="left:391.20px;top:499.13px;font-size:13px;transform-origin:0 50%;transform:translateY(-50%) scale(0.6654);color:#444;">M0101191</div>
<div class="t " style="left:441.00px;top:499.13px;font-size:13px;transform-origin:0 50%;transform:translateY(-50%) scale(0.6654);color:#444;">2022-05...</div>
<div class="t " style="left:488.80px;top:499.13px;font-size:12px;transform-origin:0 50%;transform:translateY(-50%) scale(0.6500);">无前置环节</div>
<div class="t " style="left:605.00px;top:499.13px;font-size:12px;transform-origin:50% 50%;transform:translate(-50%,-50%) scale(0.6500);">通过</div>
<div class="t " style="left:658.60px;top:499.13px;font-size:12px;transform-origin:50% 50%;transform:translate(-50%,-50%) scale(0.6500);"><span class="lk">详情</span></div>
<div class="t " style="left:144.50px;top:521.35px;font-size:13px;transform-origin:50% 50%;transform:translate(-50%,-50%) scale(0.6654);">13</div>
<div class="cb" style="left:159px;top:515.8px"></div>
<div class="t " style="left:175.80px;top:521.35px;font-size:13px;transform-origin:0 50%;transform:translateY(-50%) scale(0.6654);color:#444;">M01011...</div>
<div class="t " style="left:223.80px;top:521.35px;font-size:12px;transform-origin:0 50%;transform:translateY(-50%) scale(0.6500);"><span class="lk">唐磊</span></div>
<div class="blob" style="left:228.0px;top:511.9px;width:15px;height:17px;opacity:1.0"></div>
<div class="t " style="left:271.30px;top:521.35px;font-size:12px;transform-origin:0 50%;transform:translateY(-50%) scale(0.6500);">机械与汽车工程学院</div>
<div class="t " style="left:351.00px;top:521.35px;font-size:12px;transform-origin:0 50%;transform:translateY(-50%) scale(0.6500);">机械工程</div>
<div class="t " style="left:391.20px;top:521.35px;font-size:13px;transform-origin:0 50%;transform:translateY(-50%) scale(0.6654);color:#444;">M0101191</div>
<div class="t " style="left:441.00px;top:521.35px;font-size:13px;transform-origin:0 50%;transform:translateY(-50%) scale(0.6654);color:#444;">2022-05...</div>
<div class="t " style="left:488.80px;top:521.35px;font-size:12px;transform-origin:0 50%;transform:translateY(-50%) scale(0.6500);">无前置环节</div>
<div class="t " style="left:605.00px;top:521.35px;font-size:12px;transform-origin:50% 50%;transform:translate(-50%,-50%) scale(0.6500);">通过</div>
<div class="t " style="left:658.60px;top:521.35px;font-size:12px;transform-origin:50% 50%;transform:translate(-50%,-50%) scale(0.6500);"><span class="lk">详情</span></div>
<div class="t " style="left:144.50px;top:543.57px;font-size:13px;transform-origin:50% 50%;transform:translate(-50%,-50%) scale(0.6654);">14</div>
<div class="cb" style="left:159px;top:538.0px"></div>
<div class="t " style="left:175.80px;top:543.57px;font-size:13px;transform-origin:0 50%;transform:translateY(-50%) scale(0.6654);color:#444;">M01011...</div>
<div class="t " style="left:223.80px;top:543.57px;font-size:12px;transform-origin:0 50%;transform:translateY(-50%) scale(0.6500);"><span class="lk">代文博</span></div>
<div class="blob" style="left:231.5px;top:532.6px;width:18px;height:20px;opacity:1.0"></div>
<div class="t " style="left:271.30px;top:543.57px;font-size:12px;transform-origin:0 50%;transform:translateY(-50%) scale(0.6500);">机械与汽车工程学院</div>
<div class="t " style="left:351.00px;top:543.57px;font-size:12px;transform-origin:0 50%;transform:translateY(-50%) scale(0.6500);">机械工程</div>
<div class="t " style="left:391.20px;top:543.57px;font-size:13px;transform-origin:0 50%;transform:translateY(-50%) scale(0.6654);color:#444;">M0101191</div>
<div class="t " style="left:441.00px;top:543.57px;font-size:13px;transform-origin:0 50%;transform:translateY(-50%) scale(0.6654);color:#444;">2022-05...</div>
<div class="t " style="left:488.80px;top:543.57px;font-size:12px;transform-origin:0 50%;transform:translateY(-50%) scale(0.6500);">无前置环节</div>
<div class="t " style="left:605.00px;top:543.57px;font-size:12px;transform-origin:50% 50%;transform:translate(-50%,-50%) scale(0.6500);">通过</div>
<div class="t " style="left:658.60px;top:543.57px;font-size:12px;transform-origin:50% 50%;transform:translate(-50%,-50%) scale(0.6500);"><span class="lk">详情</span></div>
<div class="t " style="left:144.50px;top:565.79px;font-size:13px;transform-origin:50% 50%;transform:translate(-50%,-50%) scale(0.6654);">15</div>
<div class="cb" style="left:159px;top:560.2px"></div>
<div class="t " style="left:175.80px;top:565.79px;font-size:13px;transform-origin:0 50%;transform:translateY(-50%) scale(0.6654);color:#444;">M01011...</div>
<div class="t " style="left:223.80px;top:565.79px;font-size:12px;transform-origin:0 50%;transform:translateY(-50%) scale(0.6500);"><span class="lk">骆嘉怡</span></div>
<div class="blob" style="left:231.5px;top:554.8px;width:18px;height:20px;opacity:1.0"></div>
<div class="t " style="left:271.30px;top:565.79px;font-size:12px;transform-origin:0 50%;transform:translateY(-50%) scale(0.6500);">机械与汽车工程学院</div>
<div class="t " style="left:351.00px;top:565.79px;font-size:12px;transform-origin:0 50%;transform:translateY(-50%) scale(0.6500);">机械工程</div>
<div class="t " style="left:391.20px;top:565.79px;font-size:13px;transform-origin:0 50%;transform:translateY(-50%) scale(0.6654);color:#444;">M0101191</div>
<div class="t " style="left:441.00px;top:565.79px;font-size:13px;transform-origin:0 50%;transform:translateY(-50%) scale(0.6654);color:#444;">2022-05...</div>
<div class="t " style="left:488.80px;top:565.79px;font-size:12px;transform-origin:0 50%;transform:translateY(-50%) scale(0.6500);">无前置环节</div>
<div class="t " style="left:605.00px;top:565.79px;font-size:12px;transform-origin:50% 50%;transform:translate(-50%,-50%) scale(0.6500);">通过</div>
<div class="t " style="left:658.60px;top:565.79px;font-size:12px;transform-origin:50% 50%;transform:translate(-50%,-50%) scale(0.6500);"><span class="lk">详情</span></div>
<div class="t " style="left:138.00px;top:590.40px;font-size:12px;transform-origin:0 50%;transform:translateY(-50%) scale(0.6500);">每页</div>
<div class="abs" style="left:157px;top:583.2px;width:26.4px;height:12.5px;border:1px solid #ddd;background:#fff"></div>
<div class="t " style="left:161.00px;top:590.20px;font-size:13px;transform-origin:0 50%;transform:translateY(-50%) scale(0.6654);">15</div>
<div class="t " style="left:174.50px;top:589.60px;font-size:9px;transform-origin:0 50%;transform:translateY(-50%) scale(0.6667);">▼</div>
<div class="t " style="left:187.70px;top:590.40px;font-size:12px;transform-origin:0 50%;transform:translateY(-50%) scale(0.6500);">项结果 显示第 <span class="L">1</span> 至 <span class="L">15</span> 项，共 <span class="L">1415</span> 项</div>
<div class="abs" style="left:496.7px;top:580.6px;width:193px;height:17.4px;border:1px solid #e2e2e2;background:#fff"></div>
<div class="t " style="left:504.45px;top:589.30px;font-size:8px;transform-origin:50% 50%;transform:translate(-50%,-50%) scale(0.6875);color:#bbb;">◀</div>
<div class="abs" style="left:512.2px;top:580.6px;width:1px;height:17.4px;background:#e6e6e6"></div>
<div class="abs" style="left:512.2px;top:580.6px;width:15.8px;height:17.4px;background:#0b5a96"></div>
<div class="t " style="left:520.10px;top:589.50px;font-size:13px;transform-origin:50% 50%;transform:translate(-50%,-50%) scale(0.6654);color:#fff;">1</div>
<div class="abs" style="left:528.0px;top:580.6px;width:1px;height:17.4px;background:#e6e6e6"></div>
<div class="t " style="left:536.00px;top:589.50px;font-size:13px;transform-origin:50% 50%;transform:translate(-50%,-50%) scale(0.6654);color:#555;">2</div>
<div class="abs" style="left:544.0px;top:580.6px;width:1px;height:17.4px;background:#e6e6e6"></div>
<div class="t " style="left:552.00px;top:589.50px;font-size:13px;transform-origin:50% 50%;transform:translate(-50%,-50%) scale(0.6654);color:#555;">3</div>
<div class="abs" style="left:560.0px;top:580.6px;width:1px;height:17.4px;background:#e6e6e6"></div>
<div class="t " style="left:568.00px;top:589.50px;font-size:13px;transform-origin:50% 50%;transform:translate(-50%,-50%) scale(0.6654);color:#555;">4</div>
<div class="abs" style="left:576.0px;top:580.6px;width:1px;height:17.4px;background:#e6e6e6"></div>
<div class="t " style="left:584.00px;top:589.50px;font-size:13px;transform-origin:50% 50%;transform:translate(-50%,-50%) scale(0.6654);color:#555;">5</div>
<div class="abs" style="left:592.0px;top:580.6px;width:1px;height:17.4px;background:#e6e6e6"></div>
<div class="t " style="left:600.00px;top:589.50px;font-size:13px;transform-origin:50% 50%;transform:translate(-50%,-50%) scale(0.6654);color:#555;">6</div>
<div class="abs" style="left:608.0px;top:580.6px;width:1px;height:17.4px;background:#e6e6e6"></div>
<div class="t " style="left:616.00px;top:589.50px;font-size:13px;transform-origin:50% 50%;transform:translate(-50%,-50%) scale(0.6654);color:#555;">7</div>
<div class="abs" style="left:624.0px;top:580.6px;width:1px;height:17.4px;background:#e6e6e6"></div>
<div class="t " style="left:632.00px;top:589.50px;font-size:13px;transform-origin:50% 50%;transform:translate(-50%,-50%) scale(0.6654);color:#555;">8</div>
<div class="abs" style="left:640.0px;top:580.6px;width:1px;height:17.4px;background:#e6e6e6"></div>
<div class="t " style="left:648.50px;top:589.50px;font-size:13px;transform-origin:50% 50%;transform:translate(-50%,-50%) scale(0.6654);color:#555;">9</div>
<div class="abs" style="left:657.0px;top:580.6px;width:1px;height:17.4px;background:#e6e6e6"></div>
<div class="t " style="left:665.50px;top:589.50px;font-size:13px;transform-origin:50% 50%;transform:translate(-50%,-50%) scale(0.6654);color:#555;">10</div>
<div class="abs" style="left:674.0px;top:580.6px;width:1px;height:17.4px;background:#e6e6e6"></div>
<div class="t " style="left:681.85px;top:589.30px;font-size:8px;transform-origin:50% 50%;transform:translate(-50%,-50%) scale(0.6875);color:#444;">▶</div>
<div class="btn" style="left:140px;top:608.9px;width:29.8px;height:18.5px;background:#f2f2f2;"></div><div class="t " style="left:154.90px;top:619.05px;font-size:12px;transform-origin:50% 50%;transform:translate(-50%,-50%) scale(0.6500);color:#333;">通过</div>
<div class="btn" style="left:174.6px;top:608.9px;width:45.4px;height:18.5px;background:#f2f2f2;"></div><div class="t " style="left:197.30px;top:619.05px;font-size:12px;transform-origin:50% 50%;transform:translate(-50%,-50%) scale(0.6500);color:#333;">全部通过</div>
<div class="btn" style="left:224.6px;top:608.9px;width:37.5px;height:18.5px;background:#f2f2f2;"></div><div class="t " style="left:243.35px;top:619.05px;font-size:12px;transform-origin:50% 50%;transform:translate(-50%,-50%) scale(0.6500);color:#333;">不通过</div>
<div class="btn" style="left:267.1px;top:608.9px;width:45.5px;height:18.5px;background:#f2f2f2;"></div><div class="t " style="left:289.85px;top:619.05px;font-size:12px;transform-origin:50% 50%;transform:translate(-50%,-50%) scale(0.6500);color:#333;">撤销办理</div>
<div class="btn" style="left:317.7px;top:608.9px;width:45.1px;height:18.5px;background:#f2f2f2;"></div><div class="t " style="left:340.25px;top:619.05px;font-size:12px;transform-origin:50% 50%;transform:translate(-50%,-50%) scale(0.6500);color:#333;">离线办理</div>
<div class="btn" style="left:368px;top:608.9px;width:29.8px;height:18.5px;background:#f2f2f2;"></div><div class="t " style="left:382.90px;top:619.05px;font-size:12px;transform-origin:50% 50%;transform:translate(-50%,-50%) scale(0.6500);color:#333;">导出</div>
</body></html>
